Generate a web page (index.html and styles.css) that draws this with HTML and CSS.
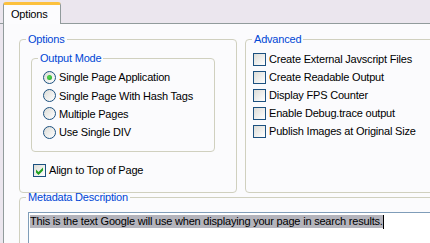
FILE: index.html
```html
<!DOCTYPE html>
<html lang="en">
<head>
  <meta charset="UTF-8">
  <title>Options</title>
  <link rel="stylesheet" href="styles.css">
</head>
<body>
  <div class="tabstrip">
    <div class="tab">Options</div>
  </div>
  <div class="panel">
    <div class="top-row">
      <fieldset class="group options-group">
        <legend>Options</legend>
        <fieldset class="group mode-group">
          <legend>Output Mode</legend>
          <div class="radio-row"><span class="radio checked"></span>Single Page Application</div>
          <div class="radio-row"><span class="radio"></span>Single Page With Hash Tags</div>
          <div class="radio-row"><span class="radio"></span>Multiple Pages</div>
          <div class="radio-row"><span class="radio"></span>Use Single DIV</div>
        </fieldset>
        <div class="check-row align-row">
          <span class="check">
            <svg width="11" height="11" viewBox="0 0 11 11"><path d="M2 4.5 L4.5 7 L9 2.5 L9 5.5 L4.5 10 L2 7.5 Z" fill="#21a121"/></svg>
          </span>Align to Top of Page
        </div>
      </fieldset>
      <fieldset class="group advanced-group">
        <legend>Advanced</legend>
        <div class="check-row"><span class="check"></span>Create External Javscript Files</div>
        <div class="check-row"><span class="check"></span>Create Readable Output</div>
        <div class="check-row"><span class="check"></span>Display FPS Counter</div>
        <div class="check-row"><span class="check"></span>Enable Debug.trace output</div>
        <div class="check-row"><span class="check"></span>Publish Images at Original Size</div>
      </fieldset>
    </div>
    <fieldset class="group meta-group">
      <legend>Metadata Description</legend>
      <div class="textbox"><span class="selected">This is the text Google will use when displaying your page in search results.</span><span class="caret"></span></div>
    </fieldset>
  </div>
</body>
</html>
```

FILE: styles.css
```css
body {
  margin: 0;
  width: 430px;
  height: 243px;
  overflow: hidden;
  background-color: #ebe6ee;
  font-family: Tahoma, "Liberation Sans", Arial, sans-serif;
  font-size: 11px;
  letter-spacing: -0.2px;
  color: #000;
}

.tabstrip {
  height: 24px;
  padding-left: 3px;
  border-bottom: 1px solid #919b9c;
  box-sizing: border-box;
  display: flex;
  align-items: flex-end;
}

.tab {
  width: 49px;
  height: 19px;
  margin-bottom: -1px;
  border: 1px solid #919b9c;
  border-bottom: none;
  border-top: 3px solid #fcc13e;
  border-radius: 3px 3px 0 0;
  background-color: #fcfcfe;
  padding-left: 7px;
  line-height: 18px;
  box-sizing: content-box;
}

.panel {
  margin-left: 3px;
  width: 600px;
  height: 240px;
  border-left: 1px solid #919b9c;
  background-color: #fbfbfd;
  padding: 9px 0 0 15px;
  box-sizing: border-box;
}

.top-row {
  display: flex;
  gap: 8px;
}

.group {
  margin: 0;
  border: 1px solid #d0d0bf;
  border-radius: 4px;
  min-width: 0;
}

.group legend {
  color: #0046d5;
  padding: 0 2px;
  line-height: 13px;
}

.options-group {
  width: 218px;
  height: 160px;
  padding: 6px 0 0 11px;
  box-sizing: border-box;
}

.options-group > legend,
.mode-group > legend {
  margin-left: -5px;
}

.mode-group {
  width: 184px;
  height: 100px;
  padding: 3px 0 0 11px;
  box-sizing: border-box;
}

.radio-row,
.check-row {
  display: flex;
  align-items: center;
  height: 18px;
  white-space: nowrap;
}

.mode-group .radio-row {
  height: 18.4px;
}

.radio {
  width: 11px;
  height: 11px;
  border: 1px solid #1c5180;
  border-radius: 50%;
  background: linear-gradient(135deg, #dcdcd7, #ffffff);
  margin-right: 3px;
  display: flex;
  align-items: center;
  justify-content: center;
}

.radio.checked::after {
  content: "";
  width: 5px;
  height: 5px;
  border-radius: 50%;
  background: radial-gradient(circle at 40% 40%, #55d851, #21a121);
}

.check {
  width: 11px;
  height: 11px;
  border: 1px solid #1c5180;
  background: linear-gradient(135deg, #dcdcd7, #ffffff);
  margin-right: 3px;
  display: flex;
  align-items: center;
  justify-content: center;
}

.align-row {
  margin-top: 9px;
  margin-left: 2px;
}

.advanced-group {
  width: 300px;
  height: 160px;
  padding: 4px 0 0 7px;
  box-sizing: border-box;
}

.advanced-group > legend {
  margin-left: -1px;
}

.meta-group {
  width: 500px;
  height: 80px;
  margin-top: -2px;
  padding: 8px 0 0 8px;
  box-sizing: border-box;
}

.meta-group > legend {
  margin-left: -2px;
}

.textbox {
  height: 60px;
  border: 1px solid #7f9db9;
  background-color: #ffffff;
  padding: 2px 0 0 1px;
  line-height: 13px;
  display: flex;
  align-items: flex-start;
}

.selected {
  background-color: #b4b4bc;
  white-space: nowrap;
}

.caret {
  width: 1px;
  height: 14px;
  background-color: #000;
}
```
